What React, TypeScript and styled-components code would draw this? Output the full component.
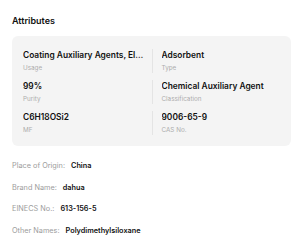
import styled, { createGlobalStyle } from 'styled-components';

const GlobalStyle = createGlobalStyle`
  body {
    margin: 0;
    background: #ffffff;
    font-family: Inter, 'Liberation Sans', sans-serif;
  }
`;

const Panel = styled.div`
  width: 300px;
  height: 249px;
  box-sizing: border-box;
  padding: 15px 9px 0 12px;
  overflow: hidden;
`;

const Heading = styled.div`
  font-size: 9px;
  font-weight: 600;
  line-height: 12px;
  color: #111;
`;

const Card = styled.div`
  margin-top: 9px;
  background: #f4f4f4;
  border-radius: 6px;
  padding: 13px 11px 11px 11px;
  display: grid;
  grid-template-columns: 1fr 1fr;
  row-gap: 7px;
`;

const Cell = styled.div<{ $divided?: boolean }>`
  display: flex;
  flex-direction: column;
  gap: 2px;
  min-width: 0;
  padding: ${(p) => (p.$divided ? '0 0 0 9px' : '0 7px 0 0')};
  border-left: ${(p) => (p.$divided ? '1px solid #e4e4e4' : 'none')};
`;

const Value = styled.div`
  font-size: 8.4px;
  font-weight: 600;
  line-height: 12px;
  color: #111;
  white-space: nowrap;
  overflow: hidden;
  text-overflow: ellipsis;
`;

const Label = styled.div`
  font-size: 6.3px;
  line-height: 10px;
  color: #adadad;
`;

const List = styled.div`
  margin-top: 14px;
  display: flex;
  flex-direction: column;
  gap: 9.5px;
`;

const Row = styled.div`
  display: flex;
  gap: 6px;
  font-size: 7.3px;
  line-height: 12px;
`;

const Key = styled.span`
  color: #9c9c9c;
`;

const Val = styled.span`
  color: #111;
  font-weight: 600;
`;

const attributes = [
  { value: 'Coating Auxiliary Agents, Electronics Chemicals', label: 'Usage' },
  { value: 'Adsorbent', label: 'Type' },
  { value: '99%', label: 'Purity' },
  { value: 'Chemical Auxiliary Agent', label: 'Classification' },
  { value: 'C6H18OSi2', label: 'MF' },
  { value: '9006-65-9', label: 'CAS No.' },
];

const details = [
  { key: 'Place of Origin:', value: 'China' },
  { key: 'Brand Name:', value: 'dahua' },
  { key: 'EINECS No.:', value: '613-156-5' },
  { key: 'Other Names:', value: 'Polydimethylsiloxane' },
];

export default function App() {
  return (
    <>
      <GlobalStyle />
      <Panel>
        <Heading>Attributes</Heading>
        <Card>
          {attributes.map((a, i) => (
            <Cell key={a.label} $divided={i % 2 === 1}>
              <Value>{a.value}</Value>
              <Label>{a.label}</Label>
            </Cell>
          ))}
        </Card>
        <List>
          {details.map((d) => (
            <Row key={d.key}>
              <Key>{d.key}</Key>
              <Val>{d.value}</Val>
            </Row>
          ))}
        </List>
      </Panel>
    </>
  );
}
